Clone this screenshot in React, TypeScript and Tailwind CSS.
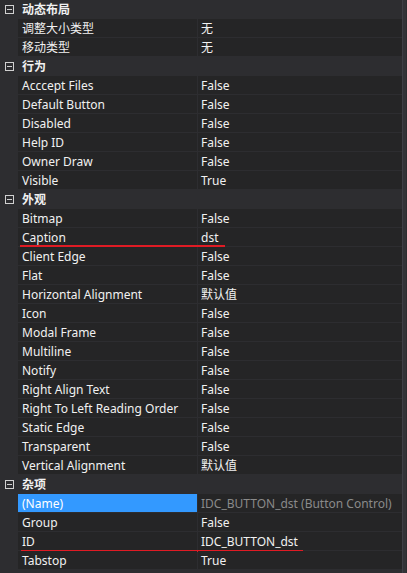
type Row = { name: string; value: string; mark?: number; selected?: boolean };
type Group = { title: string; rows: Row[] };

const groups: Group[] = [
  {
    title: '动态布局',
    rows: [
      { name: '调整大小类型', value: '无' },
      { name: '移动类型', value: '无' },
    ],
  },
  {
    title: '行为',
    rows: [
      { name: 'Acccept Files', value: 'False' },
      { name: 'Default Button', value: 'False' },
      { name: 'Disabled', value: 'False' },
      { name: 'Help ID', value: 'False' },
      { name: 'Owner Draw', value: 'False' },
      { name: 'Visible', value: 'True' },
    ],
  },
  {
    title: '外观',
    rows: [
      { name: 'Bitmap', value: 'False' },
      { name: 'Caption', value: 'dst', mark: 1 },
      { name: 'Client Edge', value: 'False' },
      { name: 'Flat', value: 'False' },
      { name: 'Horizontal Alignment', value: '默认值' },
      { name: 'Icon', value: 'False' },
      { name: 'Modal Frame', value: 'False' },
      { name: 'Multiline', value: 'False' },
      { name: 'Notify', value: 'False' },
      { name: 'Right Align Text', value: 'False' },
      { name: 'Right To Left Reading Order', value: 'False' },
      { name: 'Static Edge', value: 'False' },
      { name: 'Transparent', value: 'False' },
      { name: 'Vertical Alignment', value: '默认值' },
    ],
  },
  {
    title: '杂项',
    rows: [
      { name: '(Name)', value: 'IDC_BUTTON_dst (Button Control)', selected: true },
      { name: 'Group', value: 'False' },
      { name: 'ID', value: 'IDC_BUTTON_dst', mark: 2 },
      { name: 'Tabstop', value: 'True' },
    ],
  },
];

const MinusBox = () => (
  <span className="flex h-[9px] w-[9px] items-center justify-center border border-[#d0d0d0]">
    <span className="h-px w-[5px] bg-[#d0d0d0]" />
  </span>
);

const PropRow = ({ row }: { row: Row }) => (
  <div className="relative flex h-[19px] pb-px">
    <div className="w-[18px]" />
    <div
      className={
        row.selected
          ? 'w-[179px] bg-[#3399ff] pl-1 pt-px leading-[17px] text-white'
          : 'w-[179px] bg-[#252526] pl-1 pt-px leading-[17px]'
      }
    >
      {row.name}
    </div>
    <div className="w-px" />
    <div
      className={
        row.selected
          ? 'flex-1 whitespace-nowrap bg-[#252526] pl-[3px] pt-px leading-[17px] text-[#8a8a8a]'
          : 'flex-1 whitespace-nowrap bg-[#252526] pl-[3px] pt-px leading-[17px]'
      }
    >
      {row.value}
    </div>
    {/* red annotation underline */}
    {row.mark === 1 && <div className="absolute left-[20px] top-[17px] h-[2px] w-[205px] bg-[#e01b24]" />}
    {row.mark === 2 && <div className="absolute left-[21px] top-[18px] h-[2px] w-[282px] bg-[#e01b24]" />}
  </div>
);

const App = () => {
  return (
    <div
      className="flex h-[573px] w-[407px] overflow-hidden bg-[#2d2d30] text-[12px] text-[#f1f1f1]"
      style={{ fontFamily: '"Noto Sans", "Noto Sans CJK SC", sans-serif' }}
    >
      <div className="w-[402px]">
        {groups.map((g) => (
          <div key={g.title}>
            <div className="flex h-[19px] items-center">
              <div className="flex w-[18px] justify-center pl-px">
                <MinusBox />
              </div>
              <span className="pl-1 font-bold">{g.title}</span>
            </div>
            {g.rows.map((r) => (
              <PropRow key={r.name} row={r} />
            ))}
          </div>
        ))}
      </div>
      <div className="w-px bg-[#3f3f46]" />
      <div className="w-[3px] bg-[#333337]" />
      <div className="flex-1" />
    </div>
  );
};

export default App;
